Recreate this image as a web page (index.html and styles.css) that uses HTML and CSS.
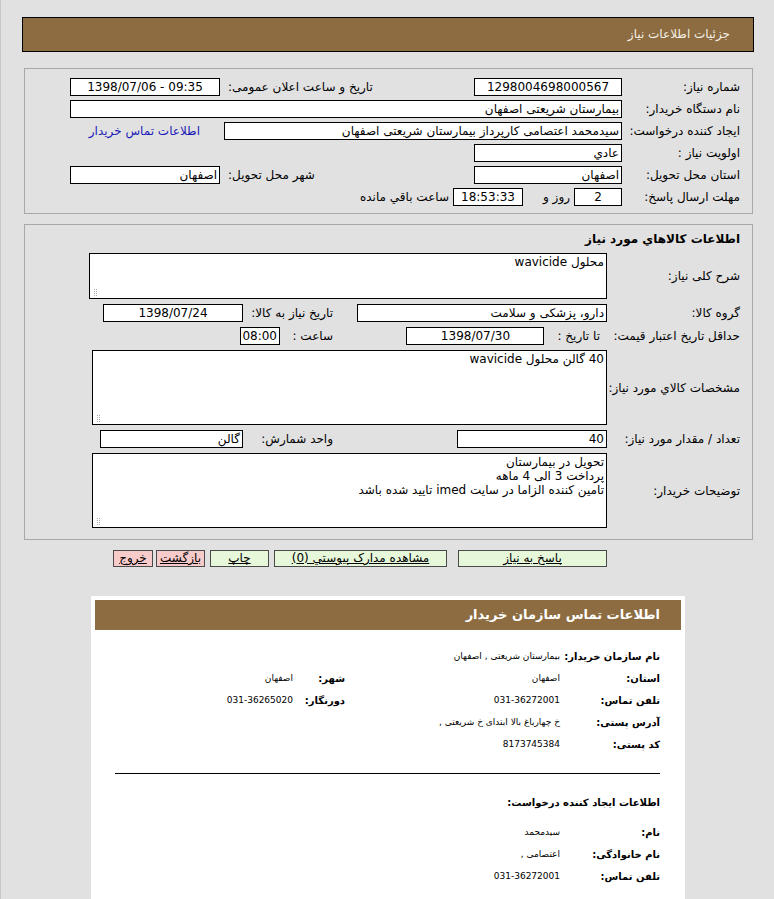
FILE: index.html
```html
<!DOCTYPE html>
<html lang="fa" dir="rtl">
<head>
    <meta charset="UTF-8">
    <meta name="viewport" content="width=device-width, initial-scale=1.0">
    <title>جزئیات اطلاعات نیاز</title>
    <link rel="stylesheet" href="styles.css">
</head>
<body>
    <div class="page">
        <div class="page-title">جزئیات اطلاعات نیاز</div>

        <div class="panel summary">
            <div class="row">
                <span class="lbl">شماره نیاز:</span>
                <span class="box w148 center">1298004698000567</span>
                <span class="lbl-side">تاریخ و ساعت اعلان عمومی:</span>
                <span class="box w150 center" dir="ltr">1398/07/06 - 09:35</span>
            </div>
            <div class="row">
                <span class="lbl">نام دستگاه خریدار:</span>
                <span class="box w552">بیمارستان شریعتی اصفهان</span>
            </div>
            <div class="row">
                <span class="lbl">ایجاد کننده درخواست:</span>
                <span class="box w398">سیدمحمد اعتصامی کارپرداز بیمارستان شریعتی اصفهان</span>
                <a class="contact-link" href="#contact">اطلاعات تماس خریدار</a>
            </div>
            <div class="row">
                <span class="lbl">اولویت نیاز :</span>
                <span class="box w148">عادي</span>
            </div>
            <div class="row">
                <span class="lbl">استان محل تحویل:</span>
                <span class="box w148">اصفهان</span>
                <span class="lbl-side">شهر محل تحویل:</span>
                <span class="box w150">اصفهان</span>
            </div>
            <div class="row">
                <span class="lbl">مهلت ارسال پاسخ:</span>
                <span class="box w48 center">2</span>
                <span class="txt days">روز و</span>
                <span class="box w70 center">18:53:33</span>
                <span class="txt remain">ساعت باقي مانده</span>
            </div>
        </div>

        <div class="panel goods">
            <div class="goods-title">اطلاعات كالاهاي مورد نياز</div>
            <div class="row area-row">
                <span class="lbl wide">شرح کلی نیاز:</span>
                <div class="area a-short">محلول wavicide</div>
            </div>
            <div class="row">
                <span class="lbl wide">گروه کالا:</span>
                <span class="main"><span class="box w250">دارو، پزشکی و سلامت</span></span>
                <span class="lbl-right">تاریخ نیاز به کالا:</span>
                <span class="box w140 center">1398/07/24</span>
            </div>
            <div class="row">
                <span class="lbl wide">حداقل تاریخ اعتبار قیمت:</span>
                <span class="main"><span class="txt until">تا تاریخ :</span><span class="box w138 center">1398/07/30</span></span>
                <span class="lbl-right short">ساعت :</span>
                <span class="box w40 center">08:00</span>
            </div>
            <div class="row area-row">
                <span class="lbl wide">مشخصات كالاي مورد نياز:</span>
                <div class="area a-tall">40 گالن محلول wavicide</div>
            </div>
            <div class="row">
                <span class="lbl wide">تعداد / مقدار مورد نیاز:</span>
                <span class="main"><span class="box w150">40</span></span>
                <span class="lbl-right">واحد شمارش:</span>
                <span class="box w143">گالن</span>
            </div>
            <div class="row area-row">
                <span class="lbl wide">توضیحات خریدار:</span>
                <div class="area a-tall">تحویل در بیمارستان<br>پرداخت 3 الی 4 ماهه<br>تامین کننده الزاما در سایت imed تایید شده باشد</div>
            </div>
        </div>

        <div class="actions">
            <a class="btn green b-reply" href="#">پاسخ به نیاز</a>
            <a class="btn green b-files" href="#">مشاهده مدارک پیوستي (0)</a>
            <a class="btn green b-print" href="#">چاپ</a>
            <a class="btn red b-back" href="#">بازگشت</a>
            <a class="btn red b-exit" href="#">خروج</a>
        </div>

        <div class="card" id="contact">
            <div class="card-title">اطلاعات تماس سازمان خریدار</div>
            <div class="card-body">
                <div class="info-grid">
                    <span class="k">نام سازمان خریدار:</span>
                    <span class="v span3">بیمارستان شریعتی , اصفهان</span>

                    <span class="k">استان:</span>
                    <span class="v">اصفهان</span>
                    <span class="k">شهر:</span>
                    <span class="v">اصفهان</span>

                    <span class="k">تلفن تماس:</span>
                    <span class="v">031-36272001</span>
                    <span class="k">دورنگار:</span>
                    <span class="v">031-36265020</span>

                    <span class="k">آدرس پستی:</span>
                    <span class="v span3">خ چهارباغ بالا ابتدای خ شریعتی ,</span>

                    <span class="k">کد پستی:</span>
                    <span class="v span3">8173745384</span>
                </div>

                <hr class="divider">

                <div class="sub-title">اطلاعات ایجاد کننده درخواست:</div>
                <div class="info-grid">
                    <span class="k">نام:</span>
                    <span class="v span3">سیدمحمد</span>

                    <span class="k">نام خانوادگی:</span>
                    <span class="v span3">اعتصامی ,</span>

                    <span class="k">تلفن تماس:</span>
                    <span class="v span3">031-36272001</span>
                </div>
            </div>
        </div>
    </div>
</body>
</html>
```

FILE: styles.css
```css
body {
    margin: 0;
    padding-left: 2px;
    border-left: 1px solid #c9c9c9;
    min-height: 899px;
    background: #e1e1e1;
    font-family: "DejaVu Sans", Tahoma, sans-serif;
    font-size: 12px;
    color: #000;
}

.page {
    direction: rtl;
    padding: 17px 20px 0 19px;
}

/* نوار عنوان بالای صفحه */
.page-title {
    height: 33px;
    line-height: 33px;
    border: 1px solid #000;
    background: #8c6c40;
    color: #f4efe6;
    padding-right: 23px;
}

.panel {
    border: 1px solid #a8a8a8;
    margin: 0 1px 0 2px;
}

.summary {
    margin-top: 16px;
    padding: 9px 12px 7px;
}

.row {
    display: flex;
    align-items: center;
    height: 18px;
    margin-bottom: 4px;
}

.row:last-child {
    margin-bottom: 0;
}

.lbl {
    width: 118px;
    flex-shrink: 0;
}

.lbl.wide {
    width: 133px;
}

.lbl-side {
    width: 254px;
    text-align: left;
    padding-left: 8px;
    box-sizing: border-box;
}

.box {
    height: 18px;
    line-height: 16px;
    box-sizing: border-box;
    border: 1px solid #000;
    background: #fff;
    padding: 0 2px;
    white-space: nowrap;
    overflow: hidden;
    flex-shrink: 0;
}

.box.center {
    text-align: center;
}

.w40 { width: 40px; }
.w48 { width: 48px; }
.w70 { width: 70px; }
.w138 { width: 138px; }
.w140 { width: 140px; }
.w143 { width: 143px; }
.w148 { width: 148px; }
.w150 { width: 150px; }
.w250 { width: 250px; }
.w398 { width: 398px; }
.w552 { width: 552px; }

.contact-link {
    margin-right: 24px;
    color: #1a1ab8;
    text-decoration: none;
}

.txt.days {
    margin: 0 4px 0 20px;
}

.txt.remain {
    margin-right: 4px;
}

/* بخش کالاها */
.goods {
    margin-top: 10px;
    padding: 6px 12px 11px;
}

.goods-title {
    font-weight: bold;
    font-size: 12px;
    height: 17px;
    line-height: 17px;
    margin-bottom: 5px;
}

.goods .row {
    margin-bottom: 5px;
}

.goods .row:last-child {
    margin-bottom: 0;
}

.area-row {
    height: auto;
}

.area {
    position: relative;
    box-sizing: border-box;
    border: 1px solid #000;
    background: #fff;
    line-height: 14px;
    padding: 1px 2px;
    flex-shrink: 0;
}

/* دستگیره تغییر اندازه */
.area::after {
    content: "";
    position: absolute;
    left: 3px;
    bottom: 2px;
    width: 5px;
    height: 7px;
    background: conic-gradient(#a9a9a9 25%, transparent 0) 0 0 / 2px 2px;
}

.a-short {
    width: 518px;
    height: 46px;
}

.a-tall {
    width: 515px;
    height: 75px;
}

.main {
    width: 250px;
    display: flex;
    align-items: center;
    flex-shrink: 0;
}

.txt.until {
    margin: 0 7px 0 13px;
}

.lbl-right {
    margin-right: 24px;
    width: 90px;
    flex-shrink: 0;
}

.lbl-right.short {
    width: 53px;
}

/* دکمه ها */
.actions {
    display: flex;
    margin: 10px 147px 0 0;
}

.btn {
    height: 17px;
    line-height: 14px;
    box-sizing: border-box;
    border: 1px solid #4a4a4a;
    color: #000;
    text-align: center;
    text-decoration: underline;
    margin-left: 5px;
}

.btn.green {
    background: #e6f7da;
}

.btn.red {
    background: #f8cbcb;
}

.b-reply { width: 149px; margin-left: 11px; }
.b-files { width: 173px; }
.b-print { width: 59px; }
.b-back { width: 49px; margin-left: 3px; }
.b-exit { width: 40px; }

/* کارت اطلاعات تماس */
.card {
    margin: 29px 69px 0 69px;
    background: #fff;
    padding: 4px 4px 20px;
}

.card-title {
    height: 30px;
    line-height: 30px;
    background: #8c6c40;
    color: #fff;
    font-weight: bold;
    font-size: 13px;
    padding-right: 21px;
}

.card-body {
    padding: 15px 21px 0 20px;
}

.info-grid {
    display: grid;
    grid-template-columns: 100px 215px 52px 1fr;
    grid-auto-rows: 22px;
    align-items: center;
}

.k {
    font-weight: bold;
    font-size: 10px;
    white-space: nowrap;
}

.v {
    font-size: 9px;
    white-space: nowrap;
}

.span3 {
    grid-column: span 3;
}

.divider {
    border: 0;
    border-top: 1px solid #000;
    margin: 18px 0 18px 0;
}

.sub-title {
    font-weight: bold;
    font-size: 10px;
    height: 22px;
    line-height: 22px;
    margin-bottom: 7px;
}
```
